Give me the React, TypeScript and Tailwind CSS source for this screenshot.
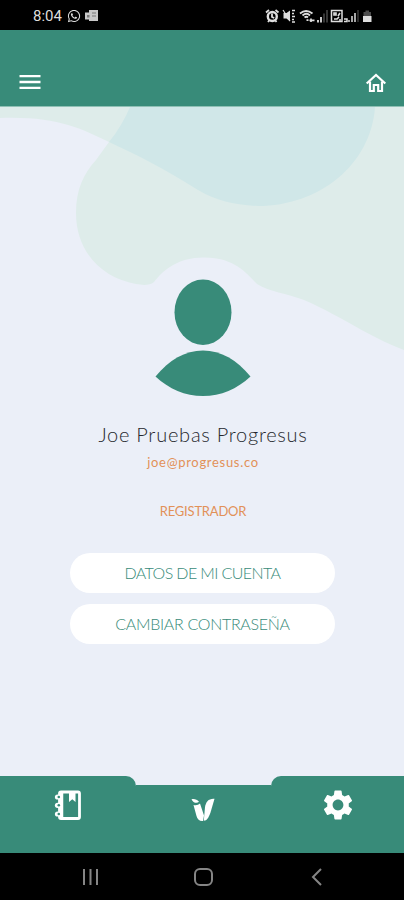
import { MdMenu, MdSettings } from 'react-icons/md';
import { FaWhatsapp } from 'react-icons/fa';

function StatusBar() {
  return (
    <div className="flex h-[30px] shrink-0 items-center justify-between bg-black pl-[33px] pr-[31px] text-[#dedede]">
      <div className="flex items-center pt-0.5">
        <span className="w-[34px] whitespace-nowrap font-[Roboto,sans-serif] text-[15px] leading-none">8:04</span>
        <FaWhatsapp className="size-[14px]" />
        <svg className="ml-[4px] h-3 w-[14px]" viewBox="0 0 14 12" fill="currentColor">
          <path d="M4 0h9v11H4V9.500H0V2.500h4z" opacity=".9" />
          <path d="M2 5h2.500v2.500H2zM7 2.500h4v1H7zM7 5.500h4v1H7z" fill="#777" />
        </svg>
      </div>
      <svg className="mt-0.5 h-[14px] w-[108px]" viewBox="265 8 108 14" fill="none" stroke="currentColor">
        {/* alarm */}
        <circle cx="272.3" cy="15.5" r="4.5" strokeWidth="2.4" />
        <path d="M266 11.5l3-2.5M275.5 9l3 2.5M268 21l1.5-2M276.5 21l-1.5-2M272 12.5v3.5l2.2 1" strokeWidth="1.8" />
        {/* vibrate */}
        <path d="M283.5 12h3l3.5-2.5v11l-3.500-3h-3z" fill="currentColor" stroke="none" />
        <path d="M283 9l7 11" strokeWidth="1.2" />
        <path d="M292 9.5h3M292 12.5h2M292 15.5h3M292 18.5h2M292 21h3" strokeWidth="1.5" />
        {/* wifi */}
        <path d="M300 12.5q6-5 12.500 0M302.5 14.5q4-3.5 7.5 0M304.5 16.5q2-1.5 3.5 0" strokeWidth="1.8" />
        <path d="M306.5 19.2h2M311 17.500v3.5M309.5 19.300h5" strokeWidth="1.7" />
        {/* first sim */}
        <path d="M318 19v2.500M321 16v5.500" strokeWidth="1.8" />
        <path d="M324 12.5v9M327 9v12.500" strokeWidth="1.4" opacity=".35" />
        {/* second sim */}
        <path d="M331.5 9.5h10.5v11h-10.5z" strokeWidth="1.5" />
        <path d="M334 12h2v2h-2zM338 15l2-3M334 18h3l2-2M340 18v2" strokeWidth="1.6" />
        <path d="M344 18h3v2.5h-3M349 19v2M352 15v6M355 12v9" strokeWidth="1.5" />
        <path d="M358 9v12" strokeWidth="1.3" opacity=".3" />
        {/* battery */}
        <path d="M363.5 11h2V9.5h3.5V11h2v4h-7.5z" fill="currentColor" stroke="none" opacity=".35" />
        <path d="M363 15h8.5v6H363z" fill="currentColor" stroke="none" />
      </svg>
    </div>
  );
}

function Header() {
  return (
    <header className="flex h-[77px] shrink-0 items-end justify-between border-b border-[#8fc0b5] bg-[#388b79] px-4 pb-[11px] text-white">
      <button type="button" aria-label="Menú" className="-mb-px">
        <MdMenu className="size-7" />
      </button>
      <button type="button" aria-label="Inicio">
        <svg className="size-6" viewBox="0 0 24 24" fill="none" stroke="currentColor" strokeWidth="2.2">
          <path d="M2.700 12.500L12 4l9.300 8.500" />
          <path d="M6 10.500V20h3.800v-6h4.400v6H18v-9.500" />
        </svg>
      </button>
    </header>
  );
}

function Background() {
  return (
    <svg className="absolute inset-x-0 top-0 h-[260px] w-full" viewBox="0 107 404 260" fill="none">
      <path
        d="M0 107H404V350C367 336 345 318 304 300C286 293 270 292 257 284C247 274 235 257 203 257.500C179 258 165 268 154 282C149 286 142 285 136 284C102 278 76 252 76 213C76 189 84 173 96 160L109 142C80 128 56 116 0 118Z"
        fill="#deecea"
      />
      <path
        d="M130 107H375C371 165 319 206 258 206C234 205 215 200 198 190C165 169 137 155 109 142Q122 126 130 107Z"
        fill="#d0e7e8"
      />
    </svg>
  );
}

function Avatar() {
  return (
    <svg className="mt-[172px] h-[119px] w-[98px]" viewBox="0 0 98 119" fill="#388b79">
      <ellipse cx="49" cy="33.200" rx="28.500" ry="32.700" />
      <path d="M1.500 97.500C15 81 31 71.500 49 71.500S83 81 96.500 97.500C83 110 67 117 49 117S15 110 1.500 97.500Z" />
    </svg>
  );
}

function TabBar() {
  return (
    <nav className="flex h-[77px] shrink-0 items-end text-white">
      <div className="flex h-[77px] w-[136px] justify-center rounded-tr-[10px] bg-[#388b79] pt-[14px]">
        <svg className="h-[31px] w-7" viewBox="0 0 28 31" fill="none" stroke="currentColor">
          <rect x="5.500" y="2" width="20" height="26.500" rx="1.500" strokeWidth="2.800" />
          <path d="M7.500 2v27" strokeWidth="3.500" />
          <path d="M15 3h6.500v9l-3.200-2.700L15 12z" fill="currentColor" stroke="none" />
          <g fill="currentColor" stroke="none">
            <circle cx="3.500" cy="7" r="2.600" />
            <circle cx="3.500" cy="15.300" r="2.600" />
            <circle cx="3.500" cy="24" r="2.600" />
          </g>
          <g fill="#388b79" stroke="none">
            <circle cx="4.800" cy="7" r="1.300" />
            <circle cx="4.800" cy="15.300" r="1.300" />
            <circle cx="4.800" cy="24" r="1.300" />
          </g>
        </svg>
      </div>
      <div className="flex h-[68px] w-[135px] justify-center bg-[#388b79] pt-[13px]">
        <svg className="mr-px h-6 w-6" viewBox="0 0 24 24" fill="currentColor">
          <path d="M.500 1.200C3 .500 6 1.200 8 3.800C6 5.800 2 5 .500 1.200Z" />
          <path d="M2.500 7Q6.500 8 9 5.500L13 17.500L12 23Q7 23.500 5.500 18Z" />
          <path d="M23.500.800C17.500 .300 15 4 14 9L12.800 22.800C16 22.500 17.500 20 19.500 14.500Z" />
        </svg>
      </div>
      <div className="flex h-[77px] w-[133px] justify-center rounded-tl-[10px] bg-[#388b79] pt-[11px]">
        <MdSettings className="size-9" />
      </div>
    </nav>
  );
}

function SystemNav() {
  return (
    <div className="flex h-[47px] shrink-0 bg-black pl-[82px] pt-[15px]">
      <svg className="h-[18px] w-[18px]" viewBox="0 0 18 18" stroke="#858585" strokeWidth="2">
        <path d="M2 1v16M8.500 1v16M15 1v16" />
      </svg>
      <svg className="ml-[94px] h-[18px] w-[19px]" viewBox="0 0 19 18" fill="none" stroke="#858585" strokeWidth="2">
        <rect x="1" y="1" width="17" height="16" rx="5" />
      </svg>
      <svg className="ml-[98px] h-[18px] w-3" viewBox="0 0 12 18" fill="none" stroke="#858585" strokeWidth="2">
        <path d="M10 1L2 9l8 8" />
      </svg>
    </div>
  );
}

function App() {
  return (
    <div className="flex h-[900px] w-[404px] flex-col overflow-hidden bg-[#ebeff8] font-[Lato,sans-serif]">
      <StatusBar />
      <Header />
      <main className="relative min-h-0 flex-1">
        <Background />
        <div className="relative flex flex-col items-center pl-[2px]">
          <Avatar />
          <h1 className="mt-[21px] text-[20px] leading-[30px] font-light tracking-[0.75px] whitespace-nowrap text-[#25272d]">
            Joe Pruebas Progresus
          </h1>
          <p className="mt-[3px] text-[13px] leading-5 tracking-[0.7px] whitespace-nowrap text-[#e29158]">joe@progresus.co</p>
          <p className="mt-[29px] text-[13px] leading-5 tracking-[-0.2px] whitespace-nowrap text-[#e29158]">REGISTRADOR</p>
          <div className="mt-[32px] mr-px flex flex-col gap-[11px] text-base font-light whitespace-nowrap text-[#388b79]">
            <button type="button" className="h-10 w-[265px] rounded-full bg-white tracking-[-0.6px]">
              DATOS DE MI CUENTA
            </button>
            <button type="button" className="h-10 w-[265px] rounded-full bg-white tracking-[-0.3px]">
              CAMBIAR CONTRASEÑA
            </button>
          </div>
        </div>
      </main>
      <TabBar />
      <SystemNav />
    </div>
  );
}

export default App;
